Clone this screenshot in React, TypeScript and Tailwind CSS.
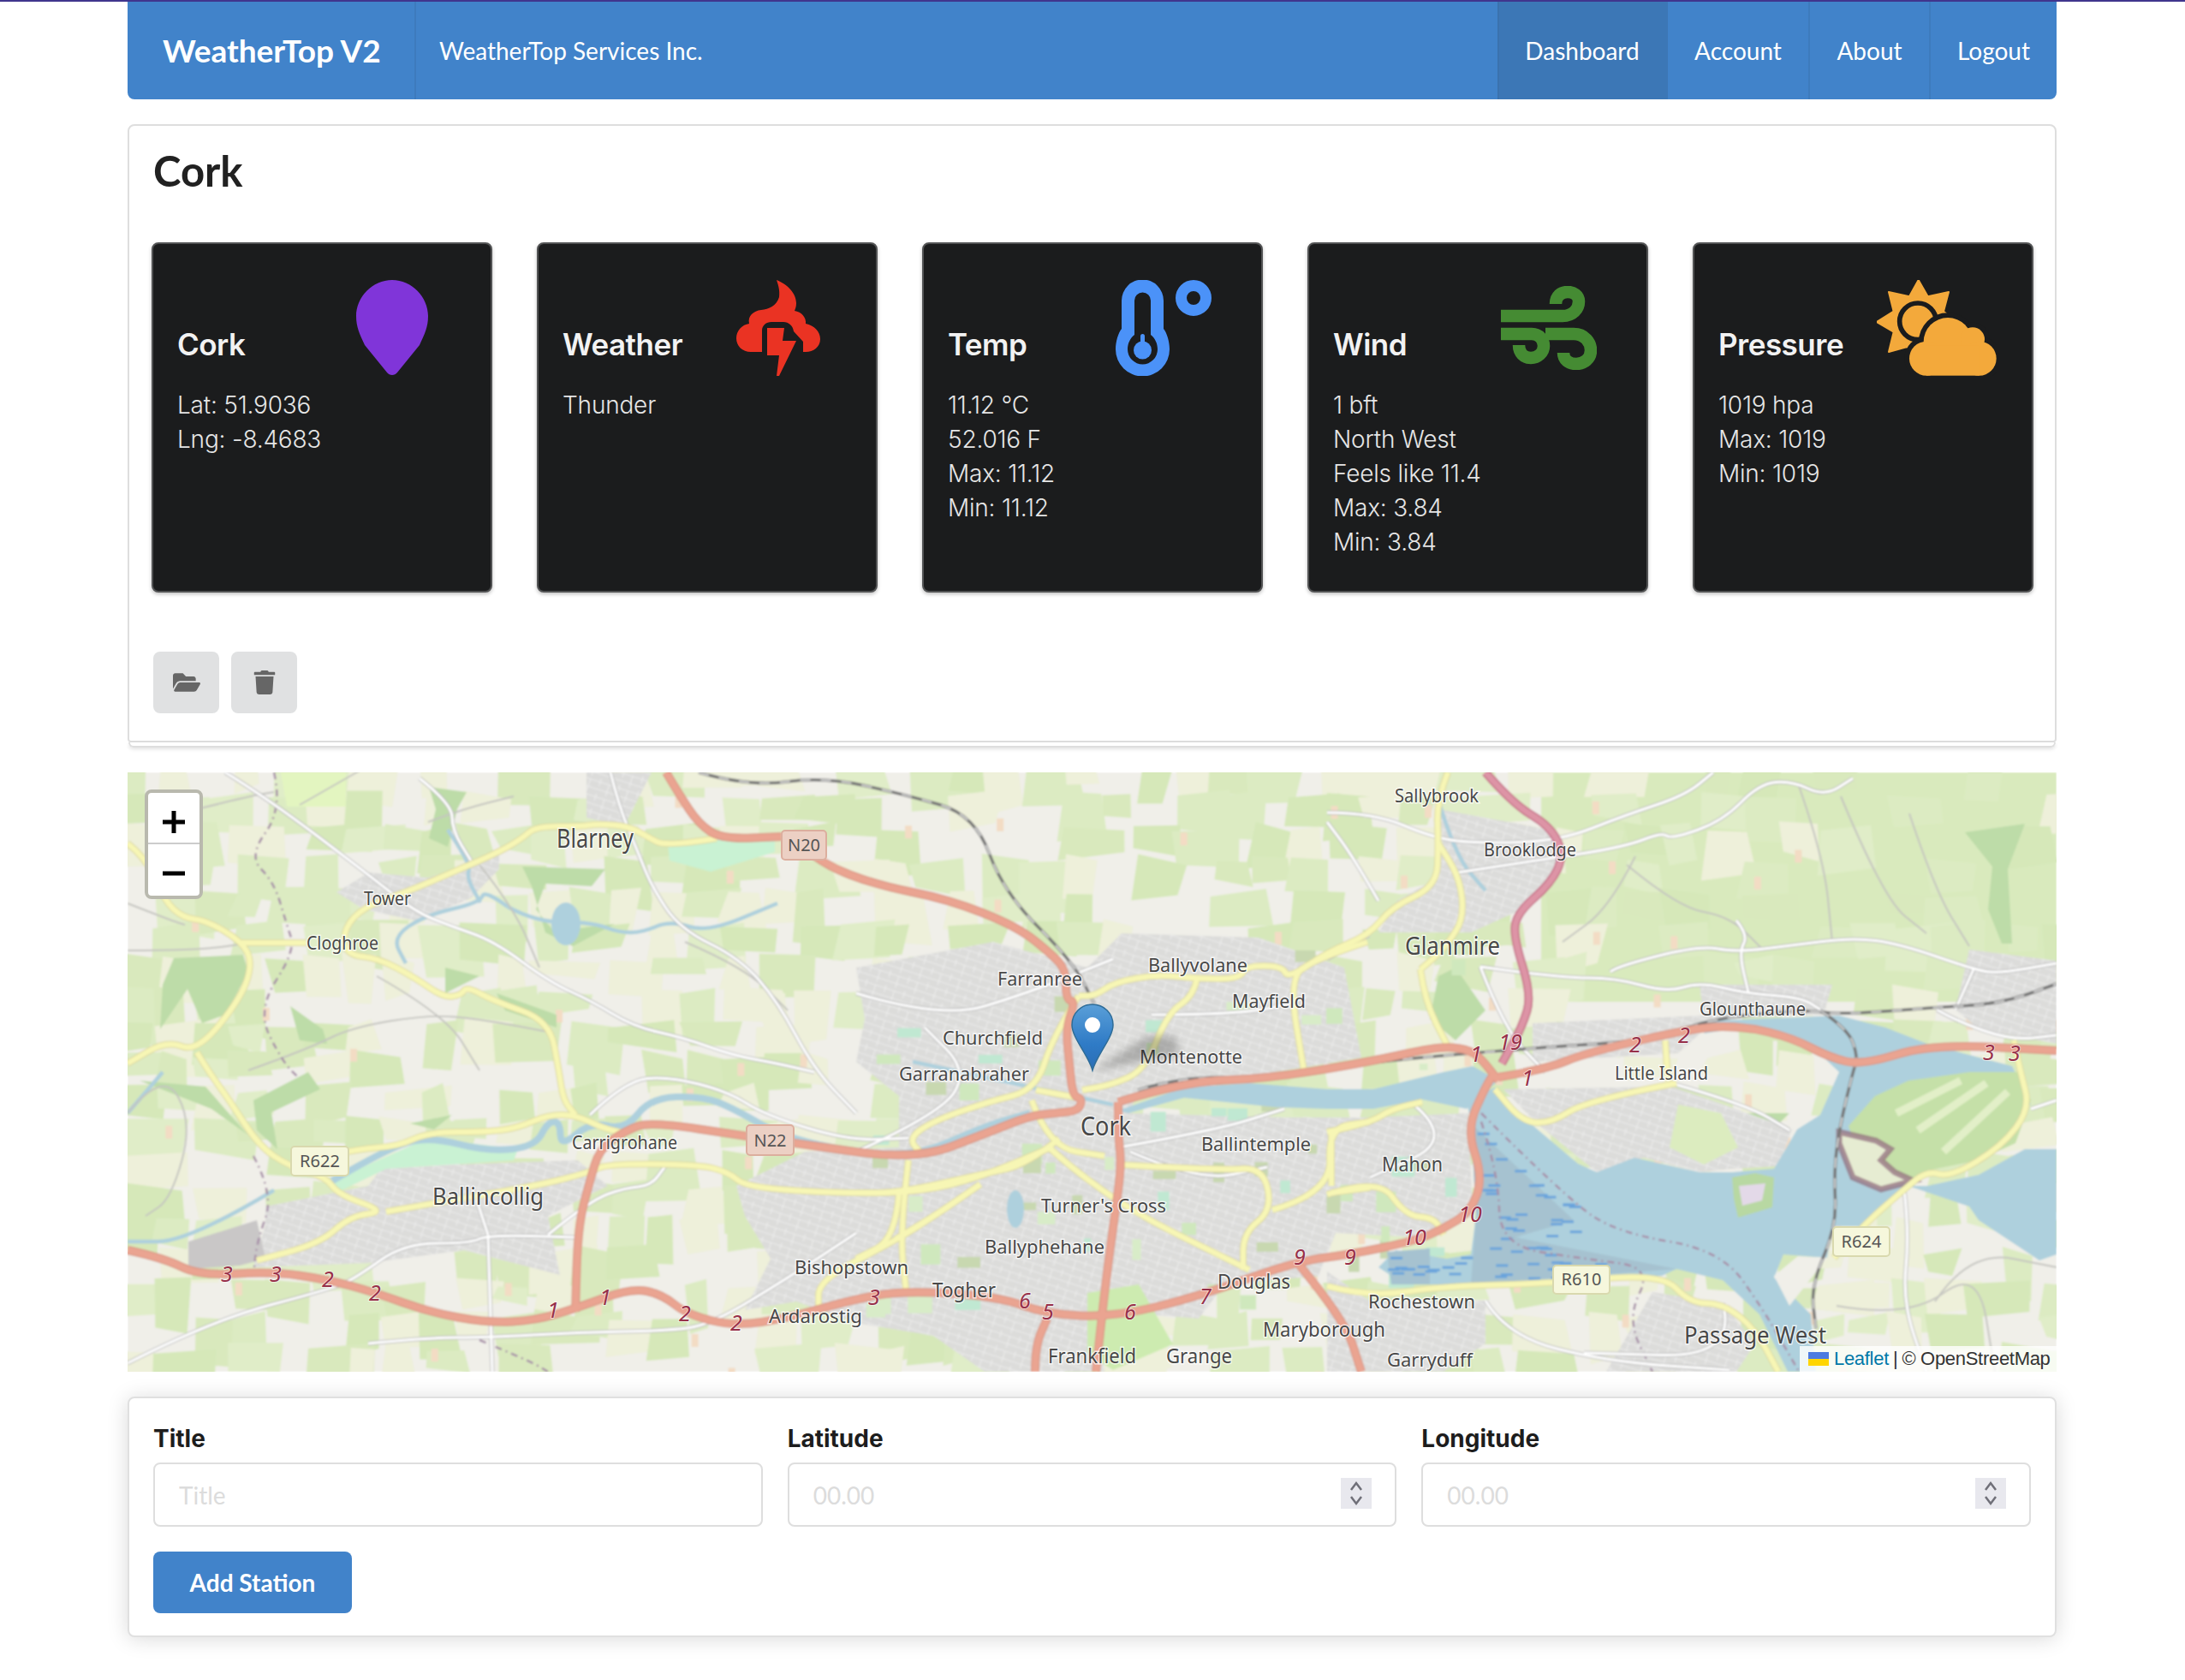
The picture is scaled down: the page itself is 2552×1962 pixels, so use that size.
import React from "react";
import { FaFolderOpen, FaTrash } from "react-icons/fa";

type Pt = [number, number];
const poly = (p: Pt[]) => "M" + p.map((q) => q.join(" ")).join("L") + "Z";
const smooth = (p: Pt[]) => {
  let d = `M${p[0][0]} ${p[0][1]}`;
  for (let i = 1; i < p.length - 1; i++) {
    const mx = (p[i][0] + p[i + 1][0]) / 2;
    const my = (p[i][1] + p[i + 1][1]) / 2;
    d += `Q${p[i][0]} ${p[i][1]} ${mx} ${my}`;
  }
  const l = p[p.length - 1];
  return d + `L${l[0]} ${l[1]}`;
};

let seed = 11;
const rnd = () => {
  seed = (seed * 16807) % 2147483647;
  return seed / 2147483647;
};
const fields: { d: string; c: string }[] = [];
for (let y = 890; y < 1610; y += 38) {
  for (let x = 140; x < 2420; x += 44) {
    const w = 30 + rnd() * 46;
    const h = 24 + rnd() * 36;
    const j = () => (rnd() - 0.5) * 14;
    const topRight = x > 1800 && y < 1170;
    const bias = topRight ? 0.3 : x > 2130 && y > 1380 ? 0.5 : x < 1000 ? 0.48 : 0.5;
    const r = rnd();
    let c = "";
    if (r < bias) c = ["#dcebc2", "#d6e8b9", "#e0edc8", "#d9e9bd"][Math.floor(rnd() * 4)];
    else if (r < bias + (topRight ? 0.1 : 0.18)) c = "#eef0da";
    if (c) {
      const a: Pt[] = [
        [x + j(), y + j()],
        [x + w + j(), y + j()],
        [x + w + j(), y + h + j()],
        [x + j(), y + h + j()],
      ];
      fields.push({ d: poly(a), c });
    }
  }
}
const spots: Pt[] = [];
for (let i = 0; i < 70; i++) spots.push([149 + rnd() * 2250, 902 + rnd() * 700]);
const parks: { x: number; y: number; w: number; h: number; c: string }[] = [];
for (let i = 0; i < 60; i++) {
  parks.push({
    x: 1010 + rnd() * 690,
    y: 1105 + rnd() * 425,
    w: 8 + rnd() * 22,
    h: 7 + rnd() * 18,
    c: ["#cfe8bd", "#c0e8d2", "#d8ecc8", "#c8d8b0"][Math.floor(rnd() * 4)],
  });
}

const forests: Pt[][] = [
  [[501,919],[545,925],[534,945],[523,989],[501,979],[509,945]],
  [[610,1012],[707,1015],[691,1035],[637,1032],[626,1062],[648,1089],[691,1082],[718,1079],[669,1105],[637,1089],[621,1035]],
  [[203,1119],[284,1115],[290,1135],[263,1185],[236,1195],[219,1155],[187,1202],[190,1150]],
  [[339,1175],[377,1202],[382,1219],[350,1215]],
  [[163,1262],[240,1269],[289,1325],[247,1295]],
  [[296,1285],[360,1252],[374,1272],[317,1299],[324,1342],[300,1320]],
  [[479,1312],[528,1302],[507,1319]],
  [[2295,972],[2365,962],[2345,1015],[2350,1102],[2338,1102],[2322,1062],[2327,1012]],
  [[1680,1140],[1700,1130],[1735,1180],[1700,1215],[1670,1190]],
  [[2010,1300],[2090,1300],[2050,1340]],
  [[520,1130],[560,1140],[520,1160]],
  [[580,1160],[650,1185],[650,1200],[590,1180]],
];

const urban: Pt[][] = [
  [[1000,1130],[1160,1100],[1270,1130],[1310,1090],[1470,1095],[1570,1130],[1590,1235],[1470,1255],[1330,1275],[1318,1300],[1500,1305],[1600,1305],[1715,1300],[1720,1420],[1660,1445],[1560,1440],[1540,1490],[1430,1500],[1400,1540],[1280,1530],[1290,1602],[1150,1602],[1090,1560],[1000,1545],[930,1520],[870,1530],[900,1470],[870,1420],[860,1385],[940,1345],[1050,1340],[1050,1280],[1000,1240],[1010,1190]],
  [[310,1409],[430,1385],[445,1365],[535,1360],[675,1355],[710,1385],[689,1395],[640,1420],[654,1489],[542,1460],[430,1475],[296,1480],[310,1430]],
  [[1680,945],[1811,969],[1827,1000],[1784,1059],[1718,1089],[1610,1089],[1632,1052],[1670,1030],[1685,985]],
  [[393,1042],[431,1019],[500,1025],[583,999],[583,1015],[550,1049],[485,1075],[425,1062]],
  [[685,902],[761,902],[729,965],[685,955]],
  [[1756,1272],[1952,1269],[1999,1285],[2093,1319],[2077,1362],[2023,1365],[1985,1369],[1920,1352],[1865,1369],[1795,1312]],
  [[1550,1485],[1599,1519],[1735,1519],[1735,1569],[1686,1602],[1550,1602]],
  [[1930,1509],[2012,1522],[2050,1569],[2028,1602],[1876,1602]],
  [[2300,1109],[2402,1122],[2402,1219],[2311,1202],[2284,1179]],
  [[1985,1150],[2140,1150],[2130,1185],[1990,1190]],
  [[1790,1195],[2010,1185],[1960,1230],[1790,1240]],
];

const water: Pt[][] = [
  [[1306,1297],[1383,1270],[1459,1265],[1550,1272],[1604,1272],[1686,1252],[1720,1245],[1750,1262],[1713,1295],[1661,1284],[1604,1295],[1550,1295],[1490,1293],[1383,1282],[1318,1300]],
  [[1713,1285],[1746,1270],[1784,1309],[1843,1359],[1865,1369],[1909,1352],[1985,1369],[2023,1369],[2072,1365],[2099,1319],[2126,1302],[2148,1252],[2160,1252],[2180,1300],[2229,1385],[2175,1432],[2140,1432],[2134,1469],[2083,1465],[2072,1492],[2115,1535],[2121,1602],[2088,1602],[2055,1535],[2012,1495],[1958,1482],[1941,1490],[1718,1500],[1640,1500],[1610,1480],[1630,1460],[1690,1470],[1718,1465],[1724,1419],[1718,1312]],
  [[2229,1385],[2300,1409],[2311,1425],[2382,1472],[2402,1465],[2402,1342],[2365,1342],[2311,1372],[2251,1385]],
  [[2001,1192],[2148,1186],[2202,1200],[2251,1219],[2350,1245],[2372,1290],[2159,1320],[2148,1252],[2130,1235],[2093,1212],[2039,1199],[1990,1207]],
];

const yellow: Pt[][] = [
  [[837,979],[778,989],[756,977],[734,965],[699,962],[680,965],[626,965],[610,979],[583,995],[528,1019],[474,1042],[425,1059],[401,1085],[404,1115],[442,1119],[485,1142],[518,1165],[539,1162],[545,1152],[577,1169],[642,1192],[653,1252],[658,1285],[672,1302]],
  [[338,1362],[409,1342],[465,1339],[500,1322],[570,1322],[605,1317],[640,1302],[672,1302],[703,1317],[731,1324]],
  [[149,985],[171,1002],[192,1052],[214,1072],[241,1075],[282,1099],[295,1124],[282,1165],[230,1229],[195,1215],[149,1242]],
  [[282,1101],[358,1101]],
  [[230,1229],[244,1252],[268,1285],[303,1339],[338,1362],[381,1375],[395,1395],[451,1415],[409,1420],[374,1452],[300,1472]],
  [[451,1415],[507,1405],[626,1385],[689,1369],[710,1359],[816,1360],[851,1369],[872,1387],[991,1394],[1075,1392],[1145,1375],[1230,1339]],
  [[1691,902],[1678,935],[1680,985],[1678,1035],[1626,1059],[1599,1092],[1550,1112],[1505,1143],[1497,1128],[1455,1128],[1448,1143],[1398,1143],[1352,1138],[1302,1147],[1279,1163],[1260,1163]],
  [[1597,1100],[1536,1120],[1505,1143],[1524,1257]],
  [[1398,1143],[1394,1163],[1364,1183],[1337,1250],[1298,1267],[1264,1273]],
  [[1260,1163],[1230,1210],[1210,1273],[1153,1287],[1088,1310],[1061,1330],[1076,1347]],
  [[1210,1273],[1264,1283]],
  [[1061,1355],[1051,1439],[1058,1505]],
  [[1237,1330],[1199,1360],[1153,1370],[1050,1393],[1000,1393]],
  [[1225,1340],[1291,1400],[1459,1483]],
  [[1050,1393],[1046,1447],[1000,1470]],
  [[1046,1447],[1092,1420],[1145,1383]],
  [[1306,1360],[1425,1367],[1475,1363],[1486,1413],[1452,1440],[1452,1483]],
  [[1486,1413],[1555,1393],[1551,1317],[1600,1310]],
  [[1555,1393],[1600,1387]],
  [[1205,1285],[1225,1340],[1290,1350]],
  [[1145,1383],[1089,1422],[1040,1452],[956,1495],[956,1530]],
  [[1550,1322],[1599,1312],[1626,1295],[1661,1287]],
  [[1555,1322],[1555,1385]],
  [[1550,1395],[1610,1375],[1642,1420],[1675,1422],[1686,1442]],
  [[1550,1502],[1599,1515],[1686,1502],[1811,1499],[1941,1487],[1974,1522],[2012,1522],[2050,1552],[2077,1602]],
  [[1958,1265],[1854,1285],[1811,1312],[1778,1310],[1746,1272]],
  [[2142,1469],[2175,1432],[2224,1389],[2251,1367],[2278,1375],[2338,1339],[2371,1295],[2360,1252],[2352,1215]],
  [[1659,1132],[1664,1169],[1691,1222]],
  [[1659,1132],[1675,1119],[1691,1102],[1710,1072],[1705,1025],[1680,985]],
  [[1945,1215],[1948,1262]],
];

const trunk: Pt[][] = [
  [[778,902],[794,929],[816,962],[843,980],[913,977]],
  [[940,990],[960,1009],[1025,1034],[1107,1050],[1188,1082],[1229,1115],[1245,1133],[1245,1167],[1256,1170],[1245,1200],[1249,1243],[1253,1280],[1264,1283],[1260,1297],[1233,1300],[1203,1303],[1153,1323],[1069,1355],[928,1335],[872,1327],[760,1310],[731,1320],[700,1342],[689,1379],[675,1432],[672,1532]],
  [[149,1460],[191,1469],[233,1490],[317,1485],[381,1494],[437,1509],[500,1532],[570,1545],[626,1542],[675,1527],[738,1504],[774,1512],[802,1535],[858,1549],[921,1539],[991,1519],[1054,1507],[1166,1514],[1223,1535],[1302,1538],[1400,1514],[1514,1473],[1577,1465],[1653,1449],[1686,1435],[1718,1415],[1732,1375],[1713,1319],[1735,1269],[1746,1252]],
  [[1306,1287],[1383,1263],[1478,1260],[1600,1240],[1680,1222],[1713,1225],[1729,1235],[1750,1262]],
  [[1306,1287],[1306,1327],[1310,1360],[1302,1420],[1291,1500],[1280,1602]],
  [[1209,1602],[1209,1572],[1223,1540]],
  [[1750,1258],[1805,1249],[1854,1229],[1985,1199],[2039,1199],[2093,1212],[2137,1235],[2175,1244],[2256,1219],[2402,1227]],
  [[1514,1473],[1570,1540],[1590,1602]],
];
const motorway: Pt[] = [[1735,902],[1767,939],[1811,965],[1827,999],[1811,1032],[1773,1065],[1767,1092],[1789,1162],[1778,1199],[1754,1242]];

const white: Pt[][] = [
  [[263,902],[312,932],[431,1022],[485,1065],[528,1082],[577,1099],[642,1147],[691,1169],[740,1199],[799,1212],[854,1232],[908,1242],[951,1252]],
  [[713,902],[723,942],[745,995],[761,1035],[794,1085],[864,1119],[908,1169],[951,1249],[1000,1300]],
  [[490,909],[528,939],[528,969],[550,1005]],
  [[149,1592],[247,1542],[388,1505],[416,1492],[472,1452],[549,1452],[570,1442],[672,1445]],
  [[640,1442],[689,1402],[731,1387],[760,1385],[777,1362]],
  [[430,1569],[500,1562],[570,1562],[675,1556],[781,1554],[830,1547],[921,1492],[1000,1440]],
  [[570,1442],[556,1399]],
  [[570,1442],[575,1602]],
  [[689,1302],[731,1262],[781,1257],[851,1275],[893,1302],[991,1332],[1061,1329]],
  [[1550,949],[1604,949],[1675,979],[1729,985],[1822,982],[1898,952],[1968,929],[2001,902]],
  [[1702,1019],[1795,1005],[1898,989],[1941,972],[1952,980],[2012,959],[2055,915],[2093,912],[2131,930],[2164,909]],
  [[1729,1129],[1822,1142],[1887,1142],[1947,1159],[1985,1147],[2039,1160],[2104,1165],[2126,1179]],
  [[1881,1135],[1887,1129],[1985,1104],[2028,1112],[2093,1104],[2164,1095],[2218,1102],[2305,1132],[2333,1137],[2402,1125]],
  [[2028,1075],[2042,1092],[2031,1112],[2042,1159]],
  [[2305,1132],[2284,1179]],
  [[2262,1179],[2284,1192],[2349,1215],[2402,1209]],
  [[1729,1129],[1757,1202],[1805,1252]],
  [[1306,1340],[1420,1320],[1500,1295]],
  [[1000,1160],[1100,1190],[1200,1160],[1300,1120]],
  [[1345,1185],[1460,1185],[1525,1165]],
  [[1000,1345],[1100,1300],[1130,1250],[1080,1200]],
  [[1320,1345],[1400,1380],[1480,1363]],
  [[1650,1289],[1700,1330],[1600,1375]],
  [[2012,1522],[2030,1585],[1850,1580]],
  [[1735,1519],[1760,1560],[1876,1590],[2020,1600]],
  [[1550,1120],[1599,1092]],
  [[1610,1052],[1580,1000],[1550,960]],
  [[2224,1389],[2230,1440],[2222,1520],[2250,1602]],
  [[1952,1265],[2040,1290],[2090,1320]],
  [[2372,1295],[2402,1285]],
];
const grayRoads: Pt[][] = [
  [[230,945],[290,930],[320,925]],
  [[149,1055],[200,1075],[216,1080]],
  [[149,1110],[230,1110],[300,1100]],
  [[290,1250],[360,1225],[410,1200],[500,1185],[560,1190],[640,1205]],
  [[440,1140],[520,1185],[560,1250]],
  [[560,1010],[600,1060],[630,1130]],
  [[800,1100],[870,1130],[920,1180]],
  [[350,940],[420,900]],
  [[500,960],[540,945],[600,930]],
  [[1900,1010],[1960,1060],[2020,1070],[2060,1110]],
  [[1910,1000],[1880,1060],[1825,1100]],
  [[2100,915],[2130,1000],[2140,1100]],
  [[2150,930],[2200,1050],[2250,1090]],
  [[2230,950],[2260,1040],[2300,1105]],
  [[149,1300],[190,1250],[225,1310],[200,1400],[170,1420]],
  [[2260,1520],[2300,1460],[2402,1480]],
  [[2145,1525],[2230,1540],[2310,1480],[2330,1602]],
];
const boundary: Pt[][] = [
  [[320,902],[330,945],[290,1000],[320,1030],[335,1080],[345,1110],[300,1180],[330,1240],[350,1260]],
  [[296,1350],[320,1395],[300,1450],[296,1490]],
  [[1730,1310],[1750,1370],[1752,1455],[1850,1470],[1930,1480],[1900,1540],[1930,1602]],
  [[1730,1300],[1830,1400],[1890,1440],[2010,1460],[2060,1530],[2100,1600]],
  [[560,1565],[620,1590],[640,1602]],
];
const rail: Pt[][] = [
  [[816,902],[875,919],[962,907],[1058,928],[1139,952],[1172,1042],[1253,1123],[1278,1172]],
  [[1329,1273],[1383,1257],[1478,1260],[1600,1240],[1789,1224],[1930,1215],[2001,1189],[2110,1179],[2148,1185],[2256,1177],[2338,1172],[2402,1149]],
  [[2126,1180],[2159,1202],[2170,1235],[2164,1252],[2148,1319],[2142,1369],[2145,1432],[2115,1502],[2121,1552]],
];
const lee: Pt[] = [[388,1379],[451,1342],[500,1327],[570,1345],[625,1339],[640,1310],[654,1310],[655,1340],[690,1310],[730,1320],[760,1282],[820,1280],[858,1295],[921,1332],[1061,1355],[1150,1315],[1203,1300]];
const streams: Pt[][] = [
  [[593,1059],[626,1077],[691,1077],[723,1089],[750,1089],[783,1075],[826,1089],[908,1055]],
  [[593,1059],[566,1039],[561,1054],[496,1069],[458,1095],[474,1125]],
  [[523,969],[550,1009],[545,1025],[561,1054]],
  [[1680,935],[1700,1000],[1735,1040]],
  [[149,1300],[175,1270],[190,1252]],
  [[1066,1240],[1300,1290]],
  [[320,1390],[220,1450],[149,1450]],
];
const labels: [string, number, number, number, number][] = [
  ["Sallybrook",1629,1727,929,22],["Brooklodge",1733,1841,992,22],["Glanmire",1641,1752,1105,29],["Glounthaune",1985,2109,1178,22],["Little Island",1886,1995,1253,22],
  ["Blarney",650,740,979,30],["Tower",425,480,1049,22],["Cloghroe",358,442,1101,22],["Ballyvolane",1341,1457,1127,22],["Farranree",1165,1264,1143,22],
  ["Mayfield",1439,1525,1169,22],["Churchfield",1101,1218,1212,22],["Montenotte",1331,1451,1234,22],["Garranabraher",1050,1202,1254,22],["Cork",1262,1321,1315,30],
  ["Ballintemple",1403,1531,1336,22],["Turner's Cross",1216,1362,1408,22],["Ballyphehane",1150,1290,1456,22],["Bishopstown",928,1061,1480,22],["Togher",1089,1163,1507,24],
  ["Ardarostig",898,1007,1537,22],["Carrigrohane",668,791,1334,22],["Ballincollig",505,635,1397,28],["Douglas",1422,1507,1497,24],["Mahon",1614,1685,1360,24],
  ["Rochestown",1598,1723,1520,22],["Maryborough",1475,1618,1553,24],["Passage West",1967,2133,1560,27],["Frankfield",1224,1327,1584,24],["Grange",1362,1439,1584,24],["Garryduff",1620,1720,1588,22],
];
const routes: [string, number, number][] = [
  ["3",265,1488],["3",322,1488],["2",383,1494],["2",438,1510],["1",646,1530],["1",707,1515],["2",800,1534],["2",860,1545],["3",1021,1515],["6",1197,1519],["5",1224,1532],["6",1320,1532],["7",1408,1514],["9",1518,1468],["9",1577,1468],["10",1652,1445],["10",1717,1418],["19",1764,1217],["1",1724,1231],["2",1910,1220],["2",1967,1209],["3",2323,1229],["3",2353,1230],["1",1784,1259],
];
const signs: [string, number, number, number, number, string, string][] = [
  ["N20",913,965,970,1004,"#ecd0c4","#dcae9e"],["N22",872,927,1314,1349,"#ecd0c4","#dcae9e"],["R622",340,407,1339,1373,"#f6f7dc","#d9d9ae"],["R610",1814,1880,1478,1511,"#f6f7dc","#d9d9ae"],["R624",2141,2207,1433,1467,"#f6f7dc","#d9d9ae"],
];
const dashes: Pt[] = [];
for (let i = 0; i < 80; i++) {
  const x = 1725 + rnd() * 220;
  const y = 1320 + rnd() * 175;
  if (y > 1320 + (x - 1725) * 0.75 && (y < 1440 || x < 1880) && (y > 1440 || x < 1840)) dashes.push([x, y]);
}
for (let i = 0; i < 14; i++) dashes.push([1620 + rnd() * 90, 1465 + rnd() * 32]);

function MapDrawing() {
  return (
    <svg viewBox="149 902 2253 700" className="block w-full h-full">
      <defs>
        <filter id="soft" x="0" y="0" width="1" height="1"><feGaussianBlur stdDeviation="1.2" /></filter>
        <filter id="soft2" x="-20%" y="-20%" width="140%" height="140%"><feGaussianBlur stdDeviation="5" /></filter>
        <pattern id="streets" width="23" height="18" patternUnits="userSpaceOnUse" patternTransform="rotate(18)">
          <path d="M0 4H23M0 13H23M6 0V9M17 4V18" stroke="#ededed" strokeWidth="1.1" fill="none" />
        </pattern>
        <linearGradient id="pin" x1="0" y1="0" x2="0" y2="1">
          <stop offset="0" stopColor="#5a9fd8" />
          <stop offset="0.6" stopColor="#2f7bc6" />
          <stop offset="1" stopColor="#2a6db5" />
        </linearGradient>
      </defs>
      <g filter="url(#soft)">
        <rect x="149" y="902" width="2253" height="700" fill="#f0efe9" />
        <rect x="1800" y="902" width="602" height="268" fill="#d9eabd" />
        {fields.map((f, i) => <path key={i} d={f.d} fill={f.c} />)}
        {spots.map((s, i) => <rect key={i} x={s[0]} y={s[1]} width="8" height="15" fill="#f3dcc4" />)}
        <path d={poly([[328,902],[404,902],[404,942],[335,942]])} fill="#e3f5c0" />
        {forests.map((p, i) => <path key={i} d={poly(p)} fill="#bddca8" />)}
        {urban.map((p, i) => <path key={i} d={poly(p)} fill="#dcdcda" />)}
        {urban.map((p, i) => <path key={i} d={poly(p)} fill="url(#streets)" />)}
        {parks.map((p, i) => <rect key={i} x={p.x} y={p.y} width={p.w} height={p.h} fill={p.c} />)}
        <path d={poly([[220,1450],[300,1425],[310,1470],[280,1478],[220,1482]])} fill="#c9c7c7" />
        <path d={poly([[388,1379],[500,1329],[605,1342],[600,1355],[451,1365],[395,1392]])} fill="#c9f2d3" />
        <path d={poly([[780,985],[905,975],[905,995],[830,1018],[782,1005]])} fill="#c9f2d3" />
        <path d={poly([[1960,1290],[2010,1300],[2030,1340],[1990,1360],[1950,1340]])} fill="#dcecbf" />
        <path d={poly([[1270,1510],[1330,1500],[1370,1570],[1300,1600],[1270,1580]])} fill="#cdebb0" />
        {water.map((p, i) => <path key={i} d={poly(p)} fill="#aed0dd" />)}
        <path d={poly([[1718,1312],[1838,1425],[1770,1445],[1958,1482],[1850,1490],[1718,1500],[1724,1419]])} fill="#a6c2d0" />
        <path d={poly([[1620,1462],[1670,1458],[1670,1500],[1625,1500]])} fill="#a6c2d0" />
        <path d={poly([[2159,1315],[2190,1280],[2229,1262],[2300,1252],[2360,1252],[2372,1285],[2354,1335],[2311,1355],[2251,1367],[2235,1385],[2205,1372],[2170,1345]])} fill="#c5e0a8" />
        <path d="M2215 1300L2290 1262M2240 1320L2320 1265M2270 1345L2345 1275" stroke="#e2efc8" strokeWidth="9" fill="none" />
        <path d={poly([[2148,1322],[2191,1332],[2208,1342],[2197,1355],[2213,1369],[2235,1379],[2197,1389],[2164,1375],[2148,1335]])} fill="#e6ecd2" stroke="#93707f" strokeWidth="7" strokeOpacity="0.75" />
        <path d={poly([[2023,1375],[2050,1370],[2072,1375],[2070,1410],[2030,1422],[2025,1400]])} fill="#b8d8a2" />
        <path d={poly([[2031,1385],[2062,1382],[2058,1402],[2035,1408]])} fill="#e3d9e8" />
        <path d={poly([[2100,1467],[2134,1469],[2090,1525],[2072,1490]])} fill="#f0efe9" />
        <ellipse cx="661" cy="1079" rx="17" ry="25" fill="#aed0dd" />
        <ellipse cx="1186" cy="1412" rx="10" ry="22" fill="#aed0dd" />
        <path d={smooth(lee)} stroke="#aed0dd" strokeWidth="8" fill="none" />
        {streams.map((p, i) => <path key={i} d={smooth(p)} stroke="#aed0dd" strokeWidth="4.5" fill="none" />)}
        {dashes.map((d, i) => <rect key={i} x={d[0]} y={d[1]} width="14" height="3" fill="#6aa4dc" />)}
        {grayRoads.map((p, i) => <path key={i} d={smooth(p)} stroke="#c5c5c0" strokeWidth="2" fill="none" />)}
        {boundary.map((p, i) => <path key={i} d={smooth(p)} stroke="#a78fa8" strokeWidth="2.5" strokeDasharray="8 5 2 5" fill="none" />)}
        {white.map((p, i) => <path key={i} d={smooth(p)} stroke="#bcbcbc" strokeWidth="5" fill="none" />)}
        {white.map((p, i) => <path key={i} d={smooth(p)} stroke="#ffffff" strokeWidth="3" fill="none" />)}
        {rail.map((p, i) => <path key={i} d={smooth(p)} stroke="#777" strokeWidth="3.5" fill="none" />)}
        {rail.map((p, i) => <path key={i} d={smooth(p)} stroke="#e6e6e6" strokeWidth="1.5" strokeDasharray="12 12" fill="none" />)}
        {yellow.map((p, i) => <path key={i} d={smooth(p)} stroke="#dcd8a2" strokeWidth="8" fill="none" />)}
        {yellow.map((p, i) => <path key={i} d={smooth(p)} stroke="#f7f6b5" strokeWidth="6" fill="none" />)}
        {trunk.map((p, i) => <path key={i} d={smooth(p)} stroke="#da9785" strokeWidth="10" fill="none" />)}
        {trunk.map((p, i) => <path key={i} d={smooth(p)} stroke="#eaa491" strokeWidth="7.5" fill="none" />)}
        <path d={smooth(motorway)} stroke="#c46d86" strokeWidth="10" fill="none" />
        <path d={smooth(motorway)} stroke="#dd94a6" strokeWidth="7" fill="none" />
      </g>
      {signs.map((s) => (
        <g key={s[0]}>
          <rect x={s[1]} y={s[3]} width={s[2] - s[1]} height={s[4] - s[3]} rx="4" fill={s[5]} stroke={s[6]} strokeWidth="2" />
          <text x={(s[1] + s[2]) / 2} y={s[4] - 10} textAnchor="middle" fontFamily="'Noto Sans', sans-serif" fontSize="20" fill="#555">{s[0]}</text>
        </g>
      ))}
      {routes.map((r, i) => (
        <text key={i} x={r[1]} y={r[2] + 9} textAnchor="middle" fontFamily="'Noto Sans', sans-serif" fontStyle="italic" fontSize="25" fill="#97304a" stroke="#ffffff" strokeOpacity="0.5" strokeWidth="2" paintOrder="stroke">{r[0]}</text>
      ))}
      {labels.map((l) => (
        <text key={l[0]} x={l[1]} y={l[3] + l[4] * 0.35} textLength={l[2] - l[1]} lengthAdjust="spacingAndGlyphs" fontFamily="'Noto Sans', sans-serif" fontSize={l[4]} fill="#484848" stroke="#ffffff" strokeOpacity="0.7" strokeWidth="3" paintOrder="stroke">{l[0]}</text>
      ))}
      <path d="M1276 1251L1340 1210L1372 1210L1378 1232L1330 1240Z" fill="#000" opacity="0.22" filter="url(#soft2)" />
      <path d="M1276 1250C1271 1232 1252 1212 1252 1197C1252 1183 1263 1173 1276 1173C1289 1173 1300 1183 1300 1197C1300 1212 1281 1232 1276 1250Z" fill="url(#pin)" stroke="#2e6c97" strokeWidth="1.5" />
      <circle cx="1276" cy="1197" r="9" fill="#ffffff" />
    </svg>
  );
}

const PinIcon = () => (
  <svg width="84" height="112" viewBox="0 0 84 112"><path d="M42 0C65 0 84 20 84 42C84 55 80 63 74 76L48 108C45 112 39 112 36 108L10 76C4 63 0 55 0 42C0 20 19 0 42 0Z" fill="#8035d9" /></svg>
);
const BoltIcon = () => (
  <svg width="98" height="112" viewBox="0 0 98 112">
    <path d="M47 0C60 5 70 16 70 27C70 31 69 33 68 36C76 37 82 44 81 51C91 53 98 60 98 69C98 78 90 84 81 84H17C7 84 0 77 0 68C0 59 7 52 15 51C13 42 20 36 29 35C38 34 47 30 50 20C51 12 49 6 47 0Z" fill="#ea3323" />
    <path d="M30 92V59C30 53 35 49 41 49H55C61 49 66 53 67 60L78 72V90H30Z" fill="#1b1c1d" />
    <path d="M36 56H56L54 71H70L50 112H47L50 88H36Z" fill="#ea3323" />
  </svg>
);
const ThermoIcon = () => (
  <svg width="112" height="112" viewBox="0 0 112 112">
    <path fillRule="evenodd" d="M7 24a24.5 24.5 0 0 1 49 0V57C60 62 63 72 63 81A31.5 31.5 0 0 1 0 81C0 72 3 62 7 57ZM22 24a9.5 9.5 0 0 1 19 0V64C46 68 49 74 49 81A17.5 17.5 0 0 1 14 81C14 74 17 68 22 64Z" fill="#4b92f8" />
    <circle cx="31.5" cy="82" r="10.5" fill="#4b92f8" />
    <rect x="29" y="63" width="5" height="16" rx="2.5" fill="#4b92f8" />
    <circle cx="91" cy="21" r="14.5" fill="none" stroke="#4b92f8" strokeWidth="13" />
  </svg>
);
const WindIcon = () => (
  <svg width="112" height="98" viewBox="0 0 112 98" fill="none" stroke="#458b33" strokeWidth="14.5" strokeLinejoin="round" className="mb-[7px]">
    <path d="M0 35H72C84 35 91 27 91 18C91 11 85 7 78 7C70 7 64 12 64 21" />
    <path d="M0 56H36C45 56 50 63 50 70C50 78 43 84 35 84C27 84 21 78 21 69" />
    <path d="M52 56H85C98 56 105 66 105 75C105 85 97 91 88 91C79 91 73 86 73 78" />
  </svg>
);
const SunCloudIcon = () => (
  <svg width="140" height="112" viewBox="36 50 420 336">
    <path d="M182 50L215 108L288 92L270 160L320 200L220 300L140 285L78 302L95 232L36 197L95 160L78 92L150 108Z" fill="#f3a93b" stroke="#f3a93b" strokeWidth="6" strokeLinejoin="round" />
    <circle cx="180" cy="195" r="64" fill="#f3a93b" stroke="#1b1c1d" strokeWidth="17" />
    <g fill="#1b1c1d" stroke="#1b1c1d" strokeWidth="34">
      <circle cx="285" cy="267" r="85" /><circle cx="372" cy="258" r="42" /><circle cx="210" cy="325" r="60" /><circle cx="395" cy="325" r="60" />
    </g>
    <g fill="#f3a93b">
      <circle cx="285" cy="267" r="85" /><circle cx="372" cy="258" r="42" /><circle cx="210" cy="325" r="60" /><circle cx="395" cy="325" r="60" /><rect x="210" y="280" width="185" height="105" />
    </g>
  </svg>
);

type CardProps = { title: string; lines: string[]; icon: React.ReactNode; pr: string };
function Card({ title, lines, icon, pr }: CardProps) {
  return (
    <div className="w-[398px] h-[409px] shrink-0 rounded-[8px] border-2 border-[#525354] bg-[#1b1c1d] pt-[42px] pl-[28px] shadow-[0_2px_4px_rgba(0,0,0,0.25)]">
      <div className={`flex justify-between items-end h-[112px] ${pr}`}>
        <h2 className="mb-[19px] font-['Inter',sans-serif] text-[35px] leading-[36px] font-semibold tracking-[-0.5px] text-[#f2f2f2]">{title}</h2>
        {icon}
      </div>
      <div className="mt-[14px] font-['Inter',sans-serif] text-[28px] leading-[40px] font-light tracking-[-0.2px] text-[#e6e6e6]">
        {lines.map((l) => <div key={l}>{l}</div>)}
      </div>
    </div>
  );
}

const Spinner = () => (
  <div className="absolute right-[29px] top-[18px] w-[36px] h-[36px] bg-[#e8e8ee] flex items-center justify-center">
    <svg width="16" height="30" viewBox="0 0 16 30" fill="none" stroke="#6f6f78" strokeWidth="2.5"><path d="M2 11L8 3L14 11M2 19L8 27L14 19" /></svg>
  </div>
);

function Field({ label, placeholder, spin }: { label: string; placeholder: string; spin?: boolean }) {
  return (
    <div className="w-[712px]">
      <div className="h-[32px] mb-[12px] font-['Inter',sans-serif] text-[28px] leading-[32px] font-bold text-[#1d1d1d]">{label}</div>
      <div className="relative">
        <input readOnly placeholder={placeholder} className="block w-full h-[75px] rounded-[8px] border-2 border-[#dedede] bg-white pl-[28px] font-['Lato',sans-serif] text-[28px] outline-none placeholder:text-[#dcdcdc]" />
        {spin && <Spinner />}
      </div>
    </div>
  );
}

export default function App() {
  return (
    <div className="min-h-[1962px] bg-white font-['Lato',sans-serif]">
      <div className="h-[2px] bg-[#40358d]" />
      <div className="ml-[149px] w-[2253px]">
        <nav className="flex h-[114px] rounded-b-[8px] bg-[#4183ca] text-white">
          <div className="flex items-center border-r-2 border-[#3d7bbd] pl-[41px] w-[337px] text-[37px] font-bold">WeatherTop V2</div>
          <div className="flex items-center pl-[27px] text-[28px]">WeatherTop Services Inc.</div>
          <div className="ml-auto flex text-[28px]">
            <div className="flex items-center w-[199px] justify-center pr-[3px] border-l-2 border-[#3a72ae] bg-[#3c77b6]">Dashboard</div>
            <div className="flex items-center w-[166px] justify-center border-r-2 border-[#3d7bbd]">Account</div>
            <div className="flex items-center w-[141px] justify-center border-r-2 border-[#3d7bbd]">About</div>
            <div className="flex items-center w-[147px] justify-center">Logout</div>
          </div>
        </nav>

        <section className="mt-[29px]">
          <div className="h-[722px] rounded-t-[8px] rounded-b-[4px] border-2 border-[#dedede] bg-white px-[28px] pt-[28px]">
            <h1 className="h-[48px] text-[49px] leading-[48px] font-bold text-[#212121]">Cork</h1>
            <div className="mt-[60px] -ml-[2px] flex gap-[52px]">
              <Card title="Cork" lines={["Lat: 51.9036", "Lng: -8.4683"]} icon={<PinIcon />} pr="pr-[73px]" />
              <Card title="Weather" lines={["Thunder"]} icon={<BoltIcon />} pr="pr-[65px]" />
              <Card title="Temp" lines={["11.12 °C", "52.016 F", "Max: 11.12", "Min: 11.12"]} icon={<ThermoIcon />} pr="pr-[58px]" />
              <Card title="Wind" lines={["1 bft", "North West", "Feels like 11.4", "Max: 3.84", "Min: 3.84"]} icon={<WindIcon />} pr="pr-[58px]" />
              <Card title="Pressure" lines={["1019 hpa", "Max: 1019", "Min: 1019"]} icon={<SunCloudIcon />} pr="pr-[41px]" />
            </div>
            <div className="mt-[69px] flex gap-[14px]">
              <button className="flex h-[72px] w-[77px] items-center justify-center rounded-[8px] bg-[#e0e1e2] text-[#666666]"><FaFolderOpen size={32} /></button>
              <button className="flex h-[72px] w-[77px] items-center justify-center rounded-[8px] bg-[#e0e1e2] text-[#666666]"><FaTrash size={28} /></button>
            </div>
          </div>
          <div className="mx-[1px] h-[6px] rounded-b-[6px] border-x-2 border-b-2 border-[#dedede] shadow-[0_2px_4px_rgba(0,0,0,0.12)]" />
        </section>

        <div className="relative mt-[29px] h-[700px] overflow-hidden">
          <MapDrawing />
          <div className="absolute left-[20px] top-[20px] w-[68px] rounded-[8px] border-[4px] border-[#b9b9ae] bg-white text-black">
            <div className="flex h-[60px] items-center justify-center rounded-t-[6px] border-b-2 border-[#cccccc] pt-[10px]">
              <svg width="26" height="26" viewBox="0 0 26 26"><path d="M13 0V26M0 13H26" stroke="#000" strokeWidth="5" /></svg>
            </div>
            <div className="flex h-[60px] items-center justify-center pt-[8px]">
              <svg width="26" height="6" viewBox="0 0 26 6"><path d="M0 3H26" stroke="#000" strokeWidth="5" /></svg>
            </div>
          </div>
          <div className="absolute right-0 bottom-0 flex h-[30px] w-[300px] items-center whitespace-nowrap bg-white/80 pl-[10px] font-['Liberation_Sans',sans-serif] text-[22px] leading-[30px] tracking-[-0.3px] text-[#333333]">
            <svg width="24" height="16" viewBox="0 0 24 16" className="mr-[6px] shrink-0"><rect width="24" height="8" fill="#4c7be0" /><rect y="8" width="24" height="8" fill="#ffd500" /></svg>
            <span className="text-[#0078a8]">Leaflet</span>
            <span className="mx-[5px]">|</span>
            <span>© OpenStreetMap</span>
          </div>
        </div>

        <div className="mt-[29px] h-[281px] rounded-[8px] border-2 border-[#e0e0e0] bg-white px-[28px] pt-[31px] shadow-[0_2px_25px_rgba(0,0,0,0.15)]">
          <div className="flex gap-[29px]">
            <Field label="Title" placeholder="Title" />
            <Field label="Latitude" placeholder="00.00" spin />
            <Field label="Longitude" placeholder="00.00" spin />
          </div>
          <button className="mt-[29px] h-[72px] w-[232px] rounded-[8px] bg-[#4183ca] text-[28px] font-bold text-white">Add Station</button>
        </div>
      </div>
    </div>
  );
}
